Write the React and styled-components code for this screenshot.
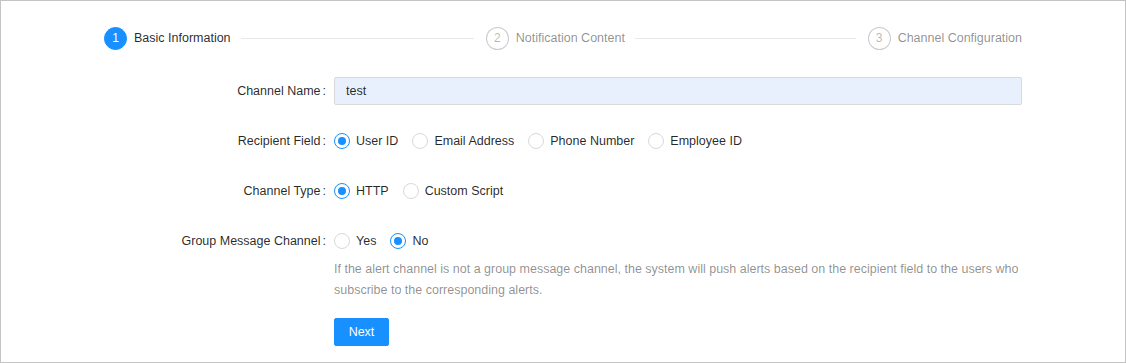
import styled, { createGlobalStyle } from "styled-components";

const GlobalStyle = createGlobalStyle`
  html, body {
    margin: 0;
    padding: 0;
    background: #fff;
  }
  * {
    box-sizing: border-box;
  }
`;

const steps = [
  { num: 1, title: "Basic Information" },
  { num: 2, title: "Notification Content" },
  { num: 3, title: "Channel Configuration" },
];

const recipientOptions = ["User ID", "Email Address", "Phone Number", "Employee ID"];
const typeOptions = ["HTTP", "Custom Script"];
const groupOptions = ["Yes", "No"];

function RadioGroup({ options, value }) {
  return (
    <Radios>
      {options.map((opt) => (
        <RadioLabel key={opt}>
          <RadioCircle $checked={opt === value} />
          <span>{opt}</span>
        </RadioLabel>
      ))}
    </Radios>
  );
}

function App() {
  return (
    <>
      <GlobalStyle />
      <Frame>
        <Content>
          <Steps>
            {steps.map((s, i) => (
              <Step key={s.num} $last={i === steps.length - 1}>
                <StepIcon $active={i === 0}>{s.num}</StepIcon>
                <StepTitle $active={i === 0}>{s.title}</StepTitle>
                {i < steps.length - 1 && <StepLine />}
              </Step>
            ))}
          </Steps>

          <Form>
            <FormRow>
              <Label>Channel Name</Label>
              <Field>
                <Input defaultValue="test" />
              </Field>
            </FormRow>

            <FormRow>
              <Label>Recipient Field</Label>
              <Field>
                <RadioGroup options={recipientOptions} value="User ID" />
              </Field>
            </FormRow>

            <FormRow>
              <Label>Channel Type</Label>
              <Field>
                <RadioGroup options={typeOptions} value="HTTP" />
              </Field>
            </FormRow>

            <FormRow $tight>
              <Label>Group Message Channel</Label>
              <Field>
                <RadioGroup options={groupOptions} value="No" />
              </Field>
            </FormRow>
            <Help>
              If the alert channel is not a group message channel, the system will push alerts based on
              the recipient field to the users who subscribe to the corresponding alerts.
            </Help>

            <Actions>
              <PrimaryButton>Next</PrimaryButton>
            </Actions>
          </Form>
        </Content>
      </Frame>
    </>
  );
}

export default App;

const Frame = styled.div`
  width: 1126px;
  height: 363px;
  border: 1px solid #c4c4c4;
  font-family: "Liberation Sans", Arial, sans-serif;
  font-size: 12.5px;
  color: rgba(0, 0, 0, 0.85);
  overflow: hidden;
`;

const Content = styled.div`
  width: 918px;
  margin-left: 103px;
  padding-top: 26px;
`;

const Steps = styled.div`
  display: flex;
  align-items: center;
  height: 22px;
`;

const Step = styled.div`
  display: flex;
  align-items: center;
  flex: ${(p) => (p.$last ? "none" : "1 1 0")};
  min-width: 0;
`;

const StepIcon = styled.div`
  width: 23px;
  height: 23px;
  flex: none;
  border-radius: 50%;
  display: flex;
  align-items: center;
  justify-content: center;
  font-size: 12px;
  background: ${(p) => (p.$active ? "#1890ff" : "#fff")};
  color: ${(p) => (p.$active ? "#fff" : "rgba(0, 0, 0, 0.3)")};
  border: 1px solid ${(p) => (p.$active ? "#1890ff" : "rgba(0, 0, 0, 0.2)")};
`;

const StepTitle = styled.div`
  margin-left: 7px;
  white-space: nowrap;
  color: ${(p) => (p.$active ? "rgba(0, 0, 0, 0.85)" : "rgba(0, 0, 0, 0.45)")};
`;

const StepLine = styled.div`
  flex: 1;
  height: 1px;
  background: #e8e8e8;
  margin: 0 12px 0 10px;
`;

const Form = styled.div`
  margin-top: 28px;
`;

const FormRow = styled.div`
  display: flex;
  align-items: center;
  height: 28px;
  margin-bottom: ${(p) => (p.$tight ? "4px" : "22px")};
`;

const Label = styled.div`
  width: 230px;
  flex: none;
  text-align: right;
  white-space: nowrap;

  &::after {
    content: ":";
    margin: 0 8px 0 2px;
  }
`;

const Field = styled.div`
  flex: 1;
  display: flex;
  align-items: center;
`;

const Input = styled.input`
  width: 100%;
  height: 28px;
  padding: 0 11px;
  border: 1px solid #d9d9d9;
  border-radius: 2px;
  background: #e8f0fe;
  font-family: inherit;
  font-size: 12.5px;
  color: rgba(0, 0, 0, 0.85);
  outline: none;
`;

const Radios = styled.div`
  display: flex;
  align-items: center;
`;

const RadioLabel = styled.label`
  display: flex;
  align-items: center;
  margin-right: 14px;
  cursor: pointer;

  & span {
    padding-left: 6px;
  }
`;

const RadioCircle = styled.span`
  position: relative;
  width: 16px;
  height: 16px;
  flex: none;
  border-radius: 50%;
  border: 1px solid ${(p) => (p.$checked ? "#1890ff" : "#d9d9d9")};
  background: #fff;

  &::after {
    content: "";
    display: ${(p) => (p.$checked ? "block" : "none")};
    position: absolute;
    top: 3px;
    left: 3px;
    width: 8px;
    height: 8px;
    border-radius: 50%;
    background: #1890ff;
  }
`;

const Help = styled.div`
  margin-left: 230px;
  line-height: 21px;
  font-size: 12.5px;
  color: rgba(0, 0, 0, 0.45);
`;

const Actions = styled.div`
  margin-left: 230px;
  margin-top: 17px;
`;

const PrimaryButton = styled.button`
  width: 55px;
  height: 28px;
  border: 1px solid #1890ff;
  border-radius: 2px;
  background: #1890ff;
  color: #fff;
  font-family: inherit;
  font-size: 12.5px;
  cursor: pointer;
`;
